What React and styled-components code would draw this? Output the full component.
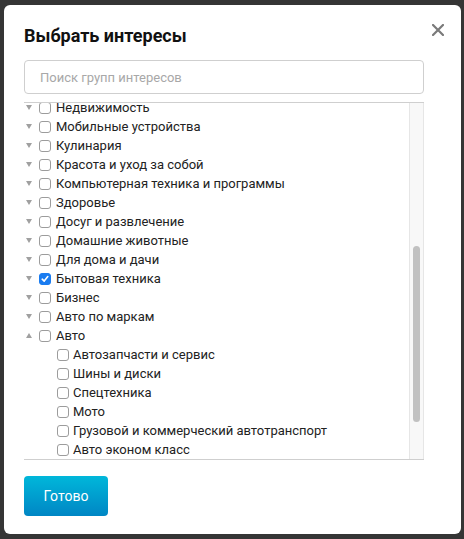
import styled, { createGlobalStyle } from "styled-components";

const GlobalStyle = createGlobalStyle`
  html, body {
    margin: 0;
    padding: 0;
    background: #353535;
  }
  body {
    font-family: Roboto, "Noto Sans", sans-serif;
    color: #222;
  }
`;

const Backdrop = styled.div`
  height: 539px;
  padding: 5px 3px 5px 4px;
  box-sizing: border-box;
`;

const Modal = styled.div`
  position: relative;
  width: 457px;
  height: 529px;
  box-sizing: border-box;
  background: #fff;
  border-radius: 6px;
  padding: 19px 37px 0 20px;
  display: flex;
  flex-direction: column;
`;

const Title = styled.h2`
  margin: 0;
  font-size: 18px;
  line-height: 24px;
  font-weight: 700;
  color: #111;
`;

const Close = styled.button`
  position: absolute;
  top: 14px;
  right: 12px;
  width: 22px;
  height: 22px;
  padding: 0;
  border: none;
  background: none;
  display: flex;
  align-items: center;
  justify-content: center;
  cursor: pointer;
`;

const Search = styled.input`
  margin-top: 12px;
  height: 34px;
  box-sizing: border-box;
  width: 100%;
  border: 1px solid #cfcfcf;
  border-radius: 4px;
  padding: 0 15px;
  font-family: inherit;
  font-size: 13px;
  outline: none;
  &::placeholder {
    color: #a8a8a8;
  }
`;

const List = styled.div`
  margin-top: 8px;
  height: 358px;
  box-sizing: border-box;
  border-top: 1px solid #cfcfcf;
  border-bottom: 1px solid #cfcfcf;
  display: flex;
`;

const Viewport = styled.div`
  flex: 1;
  overflow: hidden;
`;

// list is scrolled a few pixels, so the first row sits under the top border
const Items = styled.div`
  margin-top: -5px;
  display: flex;
  flex-direction: column;
`;

const Track = styled.div`
  width: 13px;
  flex-shrink: 0;
  background: #f8f8f8;
  border-left: 1px solid #e6e6e6;
  border-right: 1px solid #e6e6e6;
  display: flex;
  justify-content: center;
`;

const Thumb = styled.div`
  margin-top: 143px;
  width: 7px;
  height: 176px;
  border-radius: 4px;
  background: #c1c1c1;
`;

const Row = styled.label`
  display: flex;
  align-items: center;
  flex-shrink: 0;
  height: 19px;
  padding-left: ${p => (p.child ? "33px" : "2px")};
  font-size: 13px;
  white-space: nowrap;
  color: #222;
`;

const Arrow = styled.span`
  width: 0;
  height: 0;
  border-left: 3px solid transparent;
  border-right: 3px solid transparent;
  ${p => (p.open ? "border-bottom: 5px solid #a0a0a0;" : "border-top: 5px solid #a0a0a0;")}
  margin-right: 7px;
`;

const Box = styled.span`
  width: 12px;
  height: 12px;
  box-sizing: border-box;
  border-radius: 3px;
  border: 1px solid ${p => (p.checked ? "#1a7cf0" : "#9c9c9c")};
  background: ${p => (p.checked ? "#1a7cf0" : "#fff")};
  display: flex;
  align-items: center;
  justify-content: center;
  margin-right: ${p => (p.child ? "4px" : "5px")};
  flex-shrink: 0;
`;

const Footer = styled.div`
  padding-top: 16px;
`;

const DoneButton = styled.button`
  width: 84px;
  height: 40px;
  border: none;
  border-radius: 4px;
  background: linear-gradient(180deg, #00b7da, #0086c4);
  color: #fff;
  font-family: inherit;
  font-size: 14px;
  cursor: pointer;
`;

const groups = [
  "Недвижимость",
  "Мобильные устройства",
  "Кулинария",
  "Красота и уход за собой",
  "Компьютерная техника и программы",
  "Здоровье",
  "Досуг и развлечение",
  "Домашние животные",
  "Для дома и дачи",
  "Бытовая техника",
  "Бизнес",
  "Авто по маркам",
];

const autoChildren = [
  "Автозапчасти и сервис",
  "Шины и диски",
  "Спецтехника",
  "Мото",
  "Грузовой и коммерческий автотранспорт",
  "Авто эконом класс",
];

function Check({ checked, child }) {
  return (
    <Box checked={checked} child={child}>
      {checked && (
        <svg width="8" height="8" viewBox="0 0 8 8">
          <path d="M1.2 4.2 L3.2 6.1 L6.8 1.6" stroke="#fff" strokeWidth="1.6" fill="none" strokeLinecap="round" strokeLinejoin="round" />
        </svg>
      )}
    </Box>
  );
}

export default function App() {
  return (
    <>
      <GlobalStyle />
      <Backdrop>
        <Modal>
          <Title>Выбрать интересы</Title>
          <Close type="button" aria-label="Закрыть">
            <svg width="12" height="12" viewBox="0 0 12 12">
              <path d="M1 1 L11 11 M11 1 L1 11" stroke="#7a7a7a" strokeWidth="2.2" strokeLinecap="square" />
            </svg>
          </Close>
          <Search placeholder="Поиск групп интересов" />
          <List>
            <Viewport>
              <Items>
                {groups.map(name => (
                  <Row key={name}>
                    <Arrow />
                    <Check checked={name === "Бытовая техника"} />
                    {name}
                  </Row>
                ))}
                <Row>
                  <Arrow open />
                  <Check />
                  Авто
                </Row>
                {autoChildren.map(name => (
                  <Row key={name} child>
                    <Check child />
                    {name}
                  </Row>
                ))}
              </Items>
            </Viewport>
            <Track>
              <Thumb />
            </Track>
          </List>
          <Footer>
            <DoneButton type="button">Готово</DoneButton>
          </Footer>
        </Modal>
      </Backdrop>
    </>
  );
}
